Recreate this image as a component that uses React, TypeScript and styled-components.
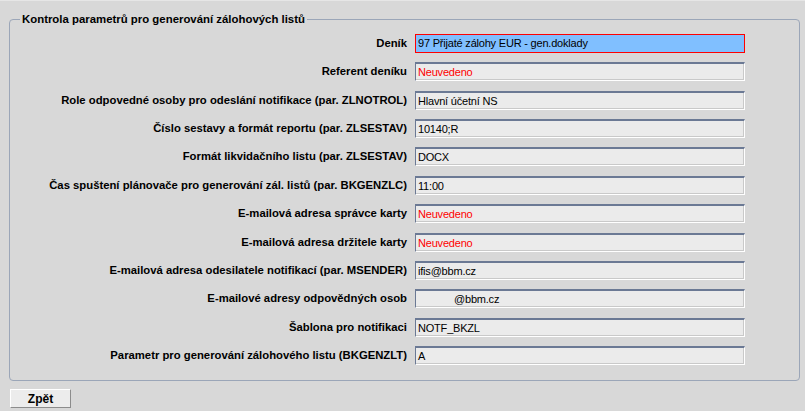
import React from 'react';
import styled, { createGlobalStyle } from 'styled-components';

const GlobalStyle = createGlobalStyle`
  html, body {
    margin: 0;
    padding: 0;
    background: #d8d8d8;
  }
  body {
    font-family: "Liberation Sans", Arial, sans-serif;
    border-top: 1px solid #e6e6e6;
  }
`;

interface Param {
  label: string,
  value: string,
  missing?: boolean,
  selected?: boolean,
  masked?: boolean,
}

const params: Param[] = [
  { label: 'Deník', value: '97 Přijaté zálohy EUR - gen.doklady', selected: true },
  { label: 'Referent deníku', value: 'Neuvedeno', missing: true },
  { label: 'Role odpovedné osoby pro odeslání notifikace (par. ZLNOTROL)', value: 'Hlavní účetní NS' },
  { label: 'Číslo sestavy a formát reportu (par. ZLSESTAV)', value: '10140;R' },
  { label: 'Formát likvidačního listu (par. ZLSESTAV)', value: 'DOCX' },
  { label: 'Čas spuštení plánovače pro generování zál. listů (par. BKGENZLC)', value: '11:00' },
  { label: 'E-mailová adresa správce karty', value: 'Neuvedeno', missing: true },
  { label: 'E-mailová adresa držitele karty', value: 'Neuvedeno', missing: true },
  { label: 'E-mailová adresa odesilatele notifikací (par. MSENDER)', value: 'ifis@bbm.cz' },
  { label: 'E-mailové adresy odpovědných osob', value: '@bbm.cz', masked: true },
  { label: 'Šablona pro notifikaci', value: 'NOTF_BKZL' },
  { label: 'Parametr pro generování zálohového listu (BKGENZLT)', value: 'A' },
];

const Page = styled.div`
  padding: 12px 5px 0 9px;
`;

const Group = styled.fieldset`
  margin: 0;
  padding: 9px 0 15px 0;
  width: 791px;
  box-sizing: border-box;
  border: 1px solid #9ba6b8;
  border-radius: 4px;
`;

const Legend = styled.legend`
  margin-left: 10px;
  padding: 0 2px;
  font-size: 11.4px;
  font-weight: bold;
  color: #000;
`;

const Grid = styled.div`
  display: grid;
  grid-template-columns: 397px 330px;
  column-gap: 8px;
  grid-auto-rows: 19px;
  row-gap: 9.36px;
`;

const Label = styled.div`
  text-align: right;
  font-size: 11.3px;
  font-weight: bold;
  line-height: 19px;
  white-space: nowrap;
  color: #000;
`;

const Field = styled.div<{ $selected?: boolean, $missing?: boolean }>`
  box-sizing: border-box;
  height: 19px;
  padding: 0 0 0 2px;
  font-size: 11px;
  letter-spacing: -0.2px;
  line-height: 16px;
  white-space: nowrap;
  overflow: hidden;
  color: ${(p) => (p.$missing ? '#ff0000' : '#000')};
  background: ${(p) => (p.$selected ? '#80bfff' : '#ebebeb')};
  border: 1px solid;
  border-color: ${(p) => (p.$selected ? '#ff0000' : '#6b7994 #ffffff #ffffff #6b7994')};
  border-top-width: ${(p) => (p.$selected ? '1px' : '2px')};
  box-shadow: ${(p) => (p.$selected ? 'none' : 'inset -1px -1px 0 #c9c9c9')};
`;

const Masked = styled.span`
  display: inline-block;
  width: 36px;
`;

const Footer = styled.div`
  padding: 8px 0 0 1px;
`;

const BackButton = styled.button`
  width: 61px;
  height: 19px;
  padding: 0;
  font-family: "Liberation Sans", Arial, sans-serif;
  font-size: 12px;
  font-weight: bold;
  color: #000;
  background: #ececec;
  border: 1px solid;
  border-color: #ffffff #8c8c8c #8c8c8c #ffffff;
  cursor: pointer;
`;

const App: React.FC = () => (
  <>
    <GlobalStyle />
    <Page>
      <Group>
        <Legend>Kontrola parametrů pro generování zálohových listů</Legend>
        <Grid>
          {params.map((param) => (
            <React.Fragment key={param.label}>
              <Label>{param.label}</Label>
              <Field $selected={param.selected} $missing={param.missing}>
                {param.masked && <Masked />}
                {param.value}
              </Field>
            </React.Fragment>
          ))}
        </Grid>
      </Group>
      <Footer>
        <BackButton type="button">Zpět</BackButton>
      </Footer>
    </Page>
  </>
);

export default App;
